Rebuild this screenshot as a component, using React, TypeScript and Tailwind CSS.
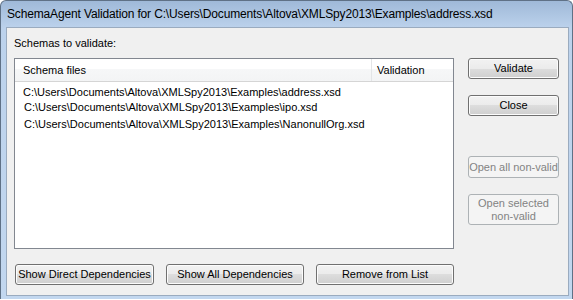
import React from "react";

const font = { fontFamily: '"Liberation Sans", Arial, sans-serif' };

function Btn({ children, className = "" }: { children: React.ReactNode; className?: string }) {
  return (
    <div
      className={`flex items-center justify-center rounded-[3px] border border-[#707070] text-[11px] leading-[13px] text-black ${className}`}
      style={{
        background: "linear-gradient(to bottom, #f2f2f2 0%, #ebebeb 50%, #dddddd 50%, #cfcfcf 100%)",
        boxShadow: "inset 0 0 0 1px #fcfcfc",
      }}
    >
      {children}
    </div>
  );
}

function DisBtn({ children, className = "" }: { children: React.ReactNode; className?: string }) {
  return (
    <div
      className={`flex items-center justify-center text-center rounded-[3px] border border-[#adb2b5] bg-[#f4f4f4] text-[11px] leading-[13px] text-[#838383] ${className}`}
    >
      {children}
    </div>
  );
}

export default function App() {
  return (
    <div className="w-[573px] h-[300px] bg-white" style={font}>
      <div
        className="w-[573px] h-[299px] flex flex-col rounded-t-[6px] border border-b-0 border-[#5f7186] border-b-[#1a1a1a]"
        style={{ background: "linear-gradient(to bottom, #9fb9d8 0px, #bcd2ec 27px, #c2d7ef 100%)" }}
      >
        <div
          className="h-[26px] flex items-center pl-[6px] text-[12px] text-black"
          style={{ fontFamily: '"Liberation Sans", Arial, sans-serif', letterSpacing: "-0.15px" }}
        >
          SchemaAgent Validation for C:\Users\Documents\Altova\XMLSpy2013\Examples\address.xsd
        </div>
        <div className="ml-[5px] mr-[3px] h-[269px] border border-[#9aabbf] bg-[#f0f0f0] flex flex-col pl-[7px]">
          <div className="pt-[9px] text-[11px] leading-[13px] text-black">Schemas to validate:</div>
          <div className="mt-[8px] flex">
            <div className="w-[440px] h-[191px] border border-[#828790] bg-white flex flex-col">
              <div
                className="h-[23px] flex border-b border-[#d5d5d5] text-[11px] text-black"
                style={{ background: "linear-gradient(to bottom, #ffffff 0%, #ffffff 45%, #f6f7f8 45%, #f3f4f5 100%)" }}
              >
                <div className="w-[357px] flex items-center pl-[8px] border-r border-[#e3e5e7]">Schema files</div>
                <div className="flex-1 flex items-center pl-[5px]">Validation</div>
              </div>
              <div className="mt-[3px] h-[14px] leading-[14px] pl-[8px] text-[11px] text-black">
                C:\Users\Documents\Altova\XMLSpy2013\Examples\address.xsd
              </div>
              <div className="mt-[1px] h-[14px] leading-[14px] pl-[9px] text-[11px] text-black">
                C:\Users\Documents\Altova\XMLSpy2013\Examples\ipo.xsd
              </div>
              <div className="mt-[3px] h-[14px] leading-[14px] pl-[9px] text-[11px] text-black">
                C:\Users\Documents\Altova\XMLSpy2013\Examples\NanonullOrg.xsd
              </div>
            </div>
            <div className="ml-[14px] w-[91px] flex flex-col">
              <Btn className="h-[21px]">Validate</Btn>
              <Btn className="h-[21px] mt-[16px]">Close</Btn>
              <DisBtn className="h-[22px] mt-[40px]">Open all non-valid</DisBtn>
              <DisBtn className="h-[31px] mt-[16px]">
                Open selected
                <br />
                non-valid
              </DisBtn>
            </div>
          </div>
          <div className="mt-[15px] flex">
            <Btn className="ml-[1px] w-[139px] h-[21px]">Show Direct Dependencies</Btn>
            <Btn className="ml-[12px] w-[138px] h-[21px]">Show All Dependencies</Btn>
            <Btn className="ml-[12px] w-[138px] h-[21px]">Remove from List</Btn>
          </div>
        </div>
      </div>
    </div>
  );
}
